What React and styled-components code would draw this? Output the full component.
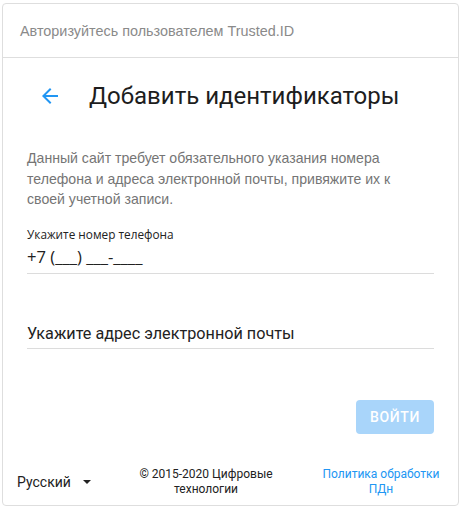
import styled, { createGlobalStyle } from "styled-components";

const GlobalStyle = createGlobalStyle`
  body {
    margin: 0;
    background: #fff;
    font-family: Roboto, "Liberation Sans", sans-serif;
  }
`;

const Card = styled.div`
  box-sizing: border-box;
  width: 457px;
  height: 503px;
  margin: 3px 0 0 2px;
  border: 1px solid #dedede;
  border-radius: 4px;
  display: flex;
  flex-direction: column;
`;

const Header = styled.div`
  height: 53px;
  display: flex;
  align-items: center;
  padding-left: 17px;
  border-bottom: 1px solid #dedede;
  font-family: "Liberation Sans", Arial, sans-serif;
  font-size: 14.4px;
  color: #8a8a8a;
`;

const Body = styled.div`
  display: flex;
  flex-direction: column;
  padding: 0 24px 0 24px;
`;

const TitleRow = styled.div`
  display: flex;
  align-items: center;
  height: 36px;
  margin-top: 20px;
`;

const BackButton = styled.button`
  border: 0;
  background: none;
  padding: 0;
  margin-left: 11px;
  width: 24px;
  height: 24px;
  display: flex;
  align-items: center;
  justify-content: center;
  color: #2196f3;
  cursor: pointer;
`;

const Title = styled.h1`
  margin: 0 0 0 27px;
  font-family: Roboto, sans-serif;
  font-weight: 400;
  font-size: 24px;
  color: #1d1d1d;
`;

const Description = styled.p`
  margin: 34px 0 0 0;
  max-width: 400px;
  font-family: "Liberation Sans", Arial, sans-serif;
  font-size: 14.1px;
  line-height: 20.5px;
  color: #757575;
`;

const Field = styled.div`
  margin-top: ${(p) => p.$top}px;
  border-bottom: 1px solid #dcdcdc;
  display: flex;
  flex-direction: column;
`;

const Label = styled.label`
  font-family: "Open Sans", sans-serif;
  font-size: 11.8px;
  line-height: 14px;
  color: #222;
`;

const Value = styled.div`
  font-family: ${(p) => (p.$placeholder ? "Roboto" : "'Open Sans'")}, sans-serif;
  font-size: ${(p) => (p.$placeholder ? 16.2 : 16.6)}px;
  line-height: 22px;
  color: #222;
  padding: ${(p) => (p.$placeholder ? "2px 0 3px" : "5px 0 5px")};
`;

const Actions = styled.div`
  display: flex;
  justify-content: flex-end;
  margin-top: 51px;
`;

const SubmitButton = styled.button`
  width: 78px;
  height: 34px;
  border: 0;
  border-radius: 4px;
  background: #a9d5fa;
  color: #fff;
  font-family: Roboto, sans-serif;
  font-weight: 500;
  font-size: 14px;
  letter-spacing: 0.6px;
`;

const Footer = styled.div`
  display: flex;
  align-items: center;
  padding: 0 0 0 14px;
  margin-top: auto;
  height: 46px;
`;

const Lang = styled.div`
  width: 114px;
  display: flex;
  align-items: center;
  gap: 12px;
  font-size: 14px;
  color: #222;
`;

const Caret = styled.span`
  width: 0;
  height: 0;
  border-left: 4px solid transparent;
  border-right: 4px solid transparent;
  border-top: 4px solid #222;
`;

const Copyright = styled.div`
  width: 150px;
  font-size: 12px;
  line-height: 15px;
  color: #222;
  text-align: center;
`;

const Policy = styled.a`
  width: 130px;
  margin-left: 35px;
  font-size: 12px;
  line-height: 15px;
  color: #2196f3;
  text-align: center;
  text-decoration: none;
`;

export default function App() {
  return (
    <>
      <GlobalStyle />
      <Card>
        <Header>Авторизуйтесь пользователем Trusted.ID</Header>
        <Body>
          <TitleRow>
            <BackButton aria-label="Назад">
              <svg width="24" height="24" viewBox="0 0 24 24">
                <path
                  fill="currentColor"
                  d="M20 11H7.83l5.59-5.59L12 4l-8 8 8 8 1.41-1.41L7.83 13H20v-2z"
                />
              </svg>
            </BackButton>
            <Title>Добавить идентификаторы</Title>
          </TitleRow>
          <Description>
            Данный сайт требует обязательного указания номера телефона и
            адреса электронной почты, привяжите их к своей учетной записи.
          </Description>
          <Field $top={17}>
            <Label>Укажите номер телефона</Label>
            <Value>+7 (___) ___-____</Value>
          </Field>
          <Field $top={47}>
            <Value $placeholder>Укажите адрес электронной почты</Value>
          </Field>
          <Actions>
            <SubmitButton disabled>ВОЙТИ</SubmitButton>
          </Actions>
        </Body>
        <Footer>
          <Lang>
            Русский
            <Caret />
          </Lang>
          <Copyright>© 2015-2020 Цифровые технологии</Copyright>
          <Policy href="#">Политика обработки ПДн</Policy>
        </Footer>
      </Card>
    </>
  );
}
